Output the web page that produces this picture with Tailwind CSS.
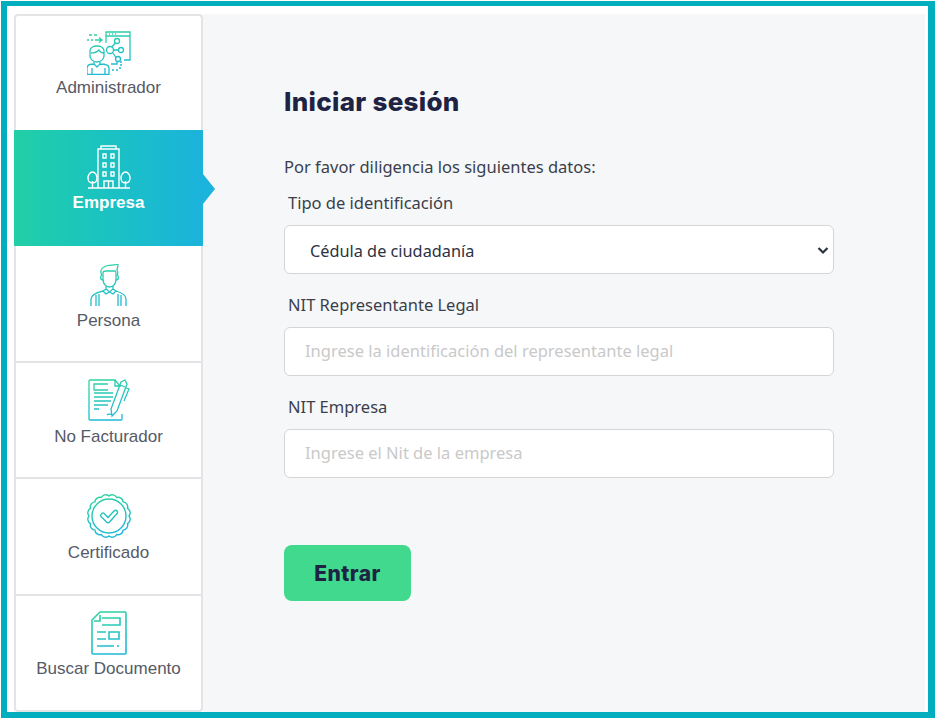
<!DOCTYPE html>
<html lang="es">
<head>
    <meta charset="UTF-8">
    <meta name="viewport" content="width=device-width, initial-scale=1.0">
    <title>Iniciar sesión</title>
    <script src="https://cdn.jsdelivr.net/npm/@tailwindcss/browser@4"></script>
</head>
<body class="bg-white overflow-hidden">
    <svg class="absolute w-0 h-0">
        <defs>
            <linearGradient id="grad" gradientUnits="userSpaceOnUse" x1="0" y1="0" x2="14" y2="44">
                <stop offset="0" stop-color="#2fd69a"/>
                <stop offset="1" stop-color="#1fb8d8"/>
            </linearGradient>
        </defs>
    </svg>
    <div class="w-[935px] h-[719px] pl-[1px] pt-[1px]">
        <div class="w-[934px] h-[717px] border-l-[6px] border-r-[7px] border-t-[5px] border-b-[6px] border-[#00aebd] bg-white pl-[7px] pt-[8px] pr-[3px] flex">
            <!-- Menu lateral -->
            <nav class="w-[189px] h-[698px] shrink-0 flex flex-col font-['Liberation_Sans',sans-serif] text-[17px] text-[#555a66]">
                <a class="h-[116px] flex flex-col items-center pt-[15px] bg-white border-x-2 border-t-2 border-[#e4e4e7] rounded-t-[4px]">
                    <svg class="w-[44px] h-[44px]" viewBox="0 0 44 44" fill="none" stroke="url(#grad)" stroke-width="1.300">
                        <path d="M19 12V1h24v28h-6M19 5h24M22 3h1M25 3h1M28 3h1"/>
                        <path d="M2 4h3M7 4h3M0 9h2M4 9h2M8 9h7M12 6.500l3 2.500-3 2.500"/>
                        <circle cx="30" cy="10" r="2.500"/><circle cx="23" cy="19" r="3.500"/><circle cx="34" cy="19" r="2.500"/><circle cx="31" cy="28" r="2.500"/>
                        <path d="M25 16l3.500-4.500M26.500 19h5M25.500 21.500l3.500 5"/>
                        <path d="M3 20c0-3 3-5 7-5s7 2 7 5v5c0 3-3 6-7 6s-7-3-7-6zM4 22c4 0 6-1 8-3 1 2 3 3 5 3"/>
                        <path d="M7 31v2l3 3 3-3v-2M0 44v-7c0-3 3-4 7-4M22 44v-7c0-3-3-4-9-4M5 44v-7M18 44v-7M0 43.500h22"/>
                        <path d="M24 33h6v-3M33 31h2M33 34h2M25 39h2M29 39h2M32 37h2"/>
                    </svg>
                    <span class="mt-[3px] leading-[20px]">Administrador</span>
                </a>
                <a class="relative h-[116px] flex flex-col items-center pt-[15px] bg-linear-to-r from-[#22cfa6] to-[#1cb3dc] text-white font-bold">
                    <svg class="w-[44px] h-[44px]" viewBox="0 0 44 44" fill="none" stroke="#fff" stroke-width="1.400">
                        <path d="M11 43V4h21v39M14 4V1h15v3"/>
                        <path d="M16 9h3v4h-3zM24 9h3v4h-3zM16 18h3v4h-3zM24 18h3v4h-3zM16 27h3v4h-3zM24 27h3v4h-3zM17 43v-7h9v7M21.500 36v7"/>
                        <path d="M1 43h42"/>
                        <path d="M5.500 43v-7M5.500 38c-3 0-4.500-2-4.500-5 0-3 2-6 4.500-6s4.500 3 4.500 6c0 3-1.500 5-4.500 5zM38.500 43v-7M38.500 38c-3 0-4.500-2-4.500-5 0-3 2-6 4.500-6s4.500 3 4.500 6c0 3-1.500 5-4.500 5z"/>
                    </svg>
                    <span class="mt-[4px] leading-[20px]">Empresa</span>
                    <span class="absolute left-full top-[44px] w-0 h-0 border-y-[15px] border-y-transparent border-l-[12px] border-l-[#1cb3dc]"></span>
                </a>
                <a class="h-[117px] flex flex-col items-center pt-[18px] bg-white border-x-2 border-b-2 border-[#e4e4e7]">
                    <svg class="w-[37px] h-[42px]" viewBox="0 0 37 42" fill="none" stroke="url(#grad)" stroke-width="1.300">
                        <path d="M12 12C10 8 11 4 14 3C18 0 24 2 28 0C28 3 27 5 27 6C28 8 28 10 27 12"/>
                        <path d="M13 12V9C13 7 15 7 16 7H25C26 7 26 9 26 12V15C26 20 23 23 19.500 23S13 20 13 15z"/>
                        <path d="M12 11C10 12 10 16 13 16M27 11C29 12 29 16 26 16"/>
                        <path d="M16 22V25L19.500 28L23 25V22M16 25L13 27L16 30L19.500 28L23 30L26 27L23 25"/>
                        <path d="M1 42V35C1 31 5 29 13 27M36 42V35C36 31 33 29 26 27M6 31V42M9 30V42M28 30V42M31 31V42"/>
                    </svg>
                    <span class="mt-[5px] leading-[20px]">Persona</span>
                </a>
                <a class="h-[116px] flex flex-col items-center pt-[16px] bg-white border-x-2 border-b-2 border-[#e4e4e7]">
                    <svg class="w-[42px] h-[42px]" viewBox="0 0 42 42" fill="none" stroke="url(#grad)" stroke-width="1.300">
                        <path d="M27 1H2c-1 0-1 0-1 1v38c0 1 0 1 1 1h31c1 0 1 0 1-1v-5M27 1l5 6h-5z"/>
                        <path d="M20 5H6v6h14M6 14h19M6 18h19M6 22h17M6 26h14M6 30h5"/>
                        <path d="M19 36c2-2 3 0 4-1M24 37l-1-7 10-27 4-2 2 4-10 27z"/>
                        <path d="M38 9l3 1-5 12M32 6l5 2"/>
                    </svg>
                    <span class="mt-[6px] leading-[20px]">No Facturador</span>
                </a>
                <a class="h-[117px] flex flex-col items-center pt-[15px] bg-white border-x-2 border-b-2 border-[#e4e4e7]">
                    <svg class="w-[44px] h-[44px]" viewBox="0 0 44 44" fill="none" stroke="url(#grad)" stroke-width="1.400">
                        <path d="M22 2A5 5 0 0 1 29.650 3.520A5 5 0 0 1 36.140 7.860A5 5 0 0 1 40.480 14.350A5 5 0 0 1 42 22A5 5 0 0 1 40.480 29.650A5 5 0 0 1 36.140 36.140A5 5 0 0 1 29.650 40.480A5 5 0 0 1 22 42A5 5 0 0 1 14.350 40.480A5 5 0 0 1 7.860 36.140A5 5 0 0 1 3.520 29.650A5 5 0 0 1 2 22A5 5 0 0 1 3.520 14.350A5 5 0 0 1 7.860 7.860A5 5 0 0 1 14.350 3.520A5 5 0 0 1 22 2z"/>
                        <circle cx="22" cy="22" r="17"/>
                        <path d="M14 20.500c1-2 3-2 4 0l3 3 6-6.500c1.500-1.500 4-.5 3.500 2l-8 9c-1 1-2 1-3 0l-5.500-5.500c-.5-.5-.5-1.500 0-2z" stroke-linejoin="round"/>
                    </svg>
                    <span class="mt-[5px] leading-[20px]">Certificado</span>
                </a>
                <a class="h-[116px] flex flex-col items-center pt-[15px] bg-white border-x-2 border-b-2 border-[#e4e4e7] rounded-b-[4px]">
                    <svg class="w-[36px] h-[44px]" viewBox="0 0 36 44" fill="none" stroke="url(#grad)" stroke-width="1.600">
                        <path d="M9 1h25c1 0 1 0 1 1v40c0 1 0 1-1 1H2c-1 0-1 0-1-1V9zM9 4v6H3"/>
                        <path d="M11 7h18v7H11M6 21h9M6 28h9M18 21h10v7H18zM6 35h17M26 35h2"/>
                    </svg>
                    <span class="mt-[4px] leading-[20px]">Buscar Documento</span>
                </a>
            </nav>

            <!-- Formulario -->
            <main class="flex-1 h-[698px] bg-[#f6f7f9] pl-[81px] pt-[72px] font-['Noto_Sans',sans-serif] text-[#3a3f4b]">
                <h1 class="font-['Inter',sans-serif] font-extrabold tracking-[0.3px] text-[26px] leading-[32px] text-[#1e2343]">Iniciar sesión</h1>
                <p class="mt-[37px] text-[16.500px] leading-[24px]">Por favor diligencia los siguientes datos:</p>
                <form class="w-[550px]">
                    <label class="block mt-[12px] pl-[4px] text-[16.500px] leading-[24px]">Tipo de identificación</label>
                    <div class="relative mt-[10px]">
                        <select class="block w-full h-[49px] pl-[25px] pr-[8px] pt-[3px] appearance-none bg-white border border-[#d5d5d8] rounded-[6px] text-[16.300px] text-[#2c3142]">
                            <option>Cédula de ciudadanía</option>
                        </select>
                        <svg class="absolute right-[5px] top-[21px] w-[12px] h-[9px]" viewBox="0 0 12 9" fill="none" stroke="#2c3142" stroke-width="2.200">
                            <path d="M1.500 2l4.500 4.500L10.500 2"/>
                        </svg>
                    </div>
                    <label class="block mt-[19px] pl-[4px] text-[16.500px] leading-[24px]">NIT Representante Legal</label>
                    <input class="block mt-[10px] w-full h-[49px] px-[20px] pb-[2px] bg-white border border-[#d5d5d8] rounded-[6px] text-[16.500px] placeholder:text-[#c9c9c9]" placeholder="Ingrese la identificación del representante legal">
                    <label class="block mt-[19px] pl-[4px] text-[16.500px] leading-[24px]">NIT Empresa</label>
                    <input class="block mt-[10px] w-full h-[49px] px-[20px] pb-[2px] bg-white border border-[#d5d5d8] rounded-[6px] text-[16.500px] placeholder:text-[#c9c9c9]" placeholder="Ingrese el Nit de la empresa">
                    <button type="button" class="block mt-[67px] w-[127px] h-[56px] pt-[2px] bg-[#41d98d] rounded-[8px] font-['Inter',sans-serif] font-extrabold tracking-[0.5px] text-[21px] text-[#1e2343]">Entrar</button>
                </form>
            </main>
        </div>
    </div>
</body>
</html>
